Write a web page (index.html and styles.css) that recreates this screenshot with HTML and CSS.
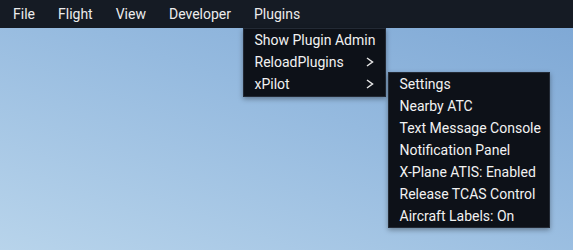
FILE: index.html
```html
<!DOCTYPE html>
<html>
<head>
<meta charset="utf-8">
<link rel="stylesheet" href="styles.css">
</head>
<body>
<div class="screen">
  <div class="menubar">
    <div class="bar-item">File</div>
    <div class="bar-item">Flight</div>
    <div class="bar-item">View</div>
    <div class="bar-item">Developer</div>
    <div class="bar-item open">Plugins
      <div class="menu plugins-menu">
        <div class="item">Show Plugin Admin</div>
        <div class="item has-sub">ReloadPlugins
          <svg class="chev" width="8" height="10" viewBox="0 0 8 10"><polyline points="1,1 6.5,5 1,9" fill="none" stroke="#e6e6e6" stroke-width="1.5"/></svg>
        </div>
        <div class="item has-sub">xPilot
          <svg class="chev" width="8" height="10" viewBox="0 0 8 10"><polyline points="1,1 6.5,5 1,9" fill="none" stroke="#e6e6e6" stroke-width="1.5"/></svg>
          <div class="menu sub-menu">
            <div class="item">Settings</div>
            <div class="item">Nearby ATC</div>
            <div class="item">Text Message Console</div>
            <div class="item">Notification Panel</div>
            <div class="item">X-Plane ATIS: Enabled</div>
            <div class="item">Release TCAS Control</div>
            <div class="item">Aircraft Labels: On</div>
          </div>
        </div>
      </div>
    </div>
  </div>
</div>
</body>
</html>
```

FILE: styles.css
```css
html, body {
  margin: 0;
  padding: 0;
}
body {
  width: 573px;
  height: 250px;
  overflow: hidden;
  font-family: Roboto, "Noto Sans", sans-serif;
  font-size: 14px;
}
.screen {
  width: 573px;
  height: 250px;
  background: linear-gradient(200deg, #7ca6d4 0%, #95badf 45%, #b8d4eb 100%);
}
.menubar {
  height: 28px;
  background: #151b24;
  display: flex;
  padding-left: 1.5px;
  color: #ececec;
}
.bar-item {
  padding: 0 11.5px;
  line-height: 28px;
  position: relative;
}
.menu {
  position: absolute;
  box-sizing: border-box;
  background: #0d1118;
  border: 1px solid #232a35;
  box-shadow: 0 2px 5px rgba(0, 0, 0, 0.35);
  color: #f2f2f2;
  z-index: 2;
}
.plugins-menu {
  top: 28px;
  left: 0;
  width: 143px;
  padding-bottom: 1px;
}
.item {
  height: 22px;
  line-height: 22px;
  padding: 0 11px;
  white-space: nowrap;
  position: relative;
  display: flex;
  align-items: center;
  justify-content: space-between;
}
.chev {
  display: block;
  margin-top: -1px;
}
.sub-menu {
  top: -1px;
  left: calc(100% + 3px);
  width: 162px;
}
.sub-menu .item {
  justify-content: flex-start;
}
```
